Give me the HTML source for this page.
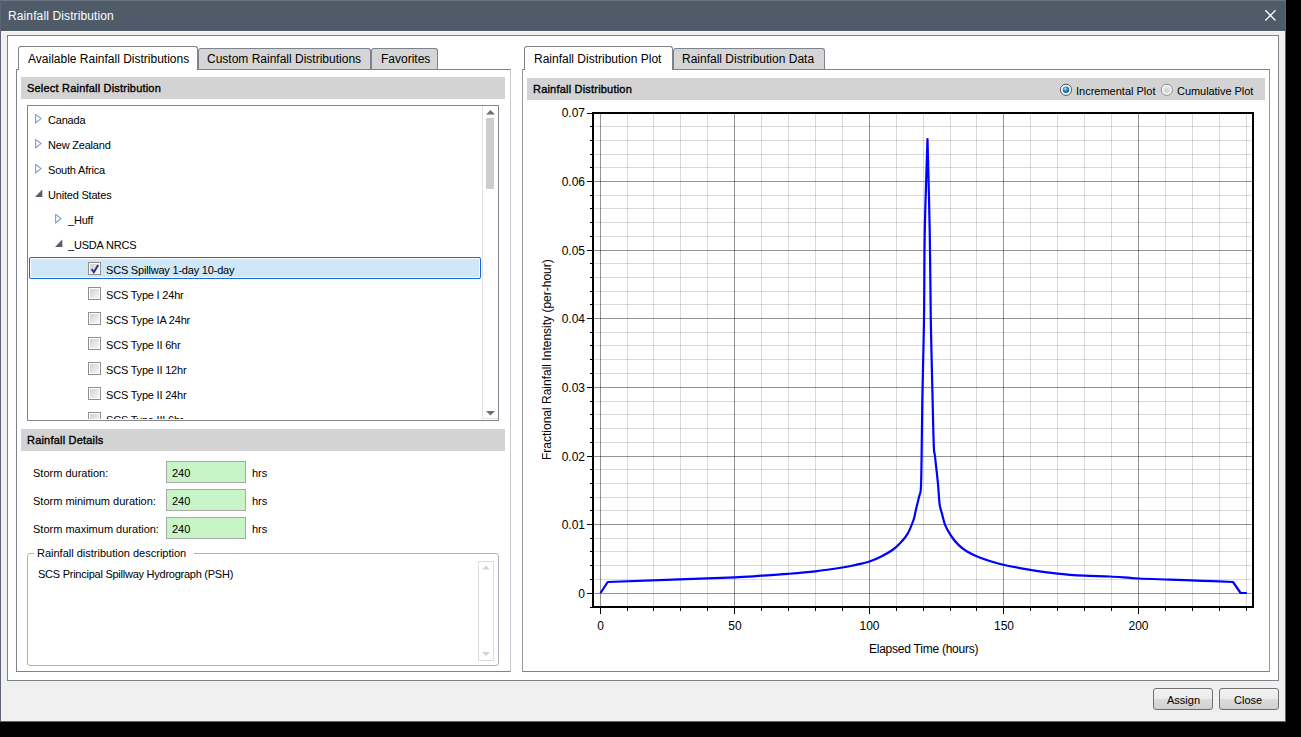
<!DOCTYPE html>
<html><head><meta charset="utf-8"><title>Rainfall Distribution</title>
<style>
html,body{margin:0;padding:0;}
body{width:1301px;height:737px;background:#000;position:relative;overflow:hidden;font-family:'Liberation Sans',sans-serif;}
div{position:absolute;box-sizing:border-box;}
.t{white-space:nowrap;}
</style></head><body>
<div style="left:0px;top:0px;width:1286px;height:722px;background:#f0f0f0;"></div>
<div style="left:0px;top:0px;width:1286px;height:31px;background:#505b69;"></div>
<div style="left:0px;top:0px;width:1286px;height:1px;background:#6b7582;"></div>
<div style="left:0px;top:31px;width:1286px;height:1px;background:#f8f8f8;"></div>
<div style="left:0px;top:0px;width:1px;height:722px;background:#5c6672;"></div>
<div style="left:1285px;top:0px;width:1px;height:722px;background:#5c6672;"></div>
<div style="left:0px;top:721px;width:1286px;height:1px;background:#5c6672;"></div>
<div class="t" style="left:8px;top:10px;font-size:12px;line-height:12px;color:#fff;letter-spacing:0.12px;">Rainfall Distribution</div>
<svg style="position:absolute;left:1262px;top:7px" width="16" height="16"><path d="M3.3 3.3 L13.5 13.5 M13.5 3.3 L3.3 13.5" stroke="#fff" stroke-width="1.25"/></svg>
<div style="left:7px;top:35px;width:1272px;height:646px;background:#fff;border:1px solid #7d838c;"></div>
<div style="left:16px;top:69px;width:495px;height:603px;background:#fff;border-top:1px solid #7d838c;border-left:1px solid #7d838c;border-bottom:1px solid #7d838c;border-right:1px solid #c7cacf;"></div>
<div style="left:18px;top:46px;width:180px;height:24px;background:#fff;border:1px solid #7d838c;border-bottom:none;border-radius:3px 3px 0 0;"></div>
<div class="t" style="left:28px;top:53px;font-size:12px;line-height:12px;color:#000;">Available Rainfall Distributions</div>
<div style="left:198px;top:48px;width:173px;height:21px;background:#d5d5d5;border:1px solid #7d838c;border-bottom:none;border-radius:3px 3px 0 0;"></div>
<div class="t" style="left:207px;top:53px;font-size:12px;line-height:12px;color:#000;">Custom Rainfall Distributions</div>
<div style="left:371px;top:48px;width:67px;height:21px;background:#d5d5d5;border:1px solid #7d838c;border-bottom:none;border-radius:3px 3px 0 0;"></div>
<div class="t" style="left:381px;top:53px;font-size:12px;line-height:12px;color:#000;">Favorites</div>
<div style="left:522px;top:69px;width:748px;height:603px;background:#fff;border-top:1px solid #7d838c;border-left:1px solid #959aa2;border-bottom:1px solid #7d838c;border-right:1px solid #959aa2;"></div>
<div style="left:524px;top:46px;width:149px;height:24px;background:#fff;border:1px solid #7d838c;border-bottom:none;border-radius:3px 3px 0 0;"></div>
<div class="t" style="left:534px;top:53px;font-size:12px;line-height:12px;color:#000;">Rainfall Distribution Plot</div>
<div style="left:673px;top:48px;width:152px;height:21px;background:#d5d5d5;border:1px solid #7d838c;border-bottom:none;border-radius:3px 3px 0 0;"></div>
<div class="t" style="left:682px;top:53px;font-size:12px;line-height:12px;color:#000;">Rainfall Distribution Data</div>
<div style="left:21px;top:77px;width:484px;height:22px;background:#d3d3d3;"></div>
<div class="t" style="left:27px;top:83px;font-size:11px;line-height:11px;letter-spacing:0.2px;color:#000;-webkit-text-stroke:0.35px #000;">Select Rainfall Distribution</div>
<div style="left:21px;top:429px;width:484px;height:22px;background:#d3d3d3;"></div>
<div class="t" style="left:27px;top:435px;font-size:11px;line-height:11px;letter-spacing:0.2px;color:#000;-webkit-text-stroke:0.35px #000;">Rainfall Details</div>
<div style="left:527px;top:78px;width:738px;height:22px;background:#d3d3d3;"></div>
<div class="t" style="left:533px;top:84px;font-size:11px;line-height:11px;letter-spacing:0.2px;color:#000;-webkit-text-stroke:0.35px #000;">Rainfall Distribution</div>
<div style="left:27px;top:105px;width:472px;height:316px;background:#fff;border:1px solid #828790;"></div>
<div style="left:482px;top:106px;width:16px;height:313px;background:#fff;border-left:1px solid #e3e3e3;border-bottom:1px solid #e3e3e3;"></div>
<svg style="position:absolute;left:482px;top:106px" width="16" height="313"><path d="M4 8.5 L8.5 4 L13 8.5 Z" fill="#6f6f6f"/><rect x="4" y="12" width="8" height="71" fill="#cdcdcd"/><path d="M4 305 L8.5 309.5 L13 305 Z" fill="#6f6f6f"/></svg>
<div style="left:28px;top:106px;width:454px;height:313px;overflow:hidden;">
<div style="left:1px;top:151px;width:452px;height:22px;border:1px solid #1a69d0;border-radius:2px;background:#cfe7f6;box-shadow:inset 0 0 0 1px #fff;"></div>
<svg style="position:absolute;left:7px;top:8px" width="10" height="11"><path d="M0.6 0.4 L6 4.6 L0.6 8.8 Z" fill="none" stroke="#7c9dd3" stroke-width="1.1"/></svg>
<div class="t" style="left:20px;top:9px;font-size:11px;line-height:11px;color:#000;letter-spacing:-0.2px;">Canada</div>
<svg style="position:absolute;left:7px;top:33px" width="10" height="11"><path d="M0.6 0.4 L6 4.6 L0.6 8.8 Z" fill="none" stroke="#7c9dd3" stroke-width="1.1"/></svg>
<div class="t" style="left:20px;top:34px;font-size:11px;line-height:11px;color:#000;letter-spacing:-0.2px;">New Zealand</div>
<svg style="position:absolute;left:7px;top:58px" width="10" height="11"><path d="M0.6 0.4 L6 4.6 L0.6 8.8 Z" fill="none" stroke="#7c9dd3" stroke-width="1.1"/></svg>
<div class="t" style="left:20px;top:59px;font-size:11px;line-height:11px;color:#000;letter-spacing:-0.2px;">South Africa</div>
<svg style="position:absolute;left:7px;top:83px" width="10" height="10"><path d="M7.3 0.6 L7.3 8 L-0.1 8 Z" fill="#5b5b6b"/></svg>
<div class="t" style="left:20px;top:84px;font-size:11px;line-height:11px;color:#000;letter-spacing:-0.2px;">United States</div>
<svg style="position:absolute;left:27px;top:108px" width="10" height="11"><path d="M0.6 0.4 L6 4.6 L0.6 8.8 Z" fill="none" stroke="#7c9dd3" stroke-width="1.1"/></svg>
<div class="t" style="left:40px;top:109px;font-size:11px;line-height:11px;color:#000;letter-spacing:-0.2px;">_Huff</div>
<svg style="position:absolute;left:27px;top:133px" width="10" height="10"><path d="M7.3 0.6 L7.3 8 L-0.1 8 Z" fill="#5b5b6b"/></svg>
<div class="t" style="left:40px;top:134px;font-size:11px;line-height:11px;color:#000;letter-spacing:-0.2px;">_USDA NRCS</div>
<svg style="position:absolute;left:60px;top:156px" width="13" height="13"><defs><linearGradient id="cbg" x1="0" y1="0" x2="1" y2="1"><stop offset="0" stop-color="#cfd1d4"/><stop offset="1" stop-color="#f7f7f7"/></linearGradient></defs><rect x="0.5" y="0.5" width="12" height="12" fill="#fff" stroke="#8e8f8f"/><rect x="2" y="2" width="9" height="9" fill="url(#cbg)"/><path d="M3.6 7 L5.8 10.2 L10.2 3" fill="none" stroke="#2e3192" stroke-width="2"/></svg>
<div class="t" style="left:78px;top:159px;font-size:11px;line-height:11px;color:#000;letter-spacing:-0.2px;">SCS Spillway 1-day 10-day</div>
<svg style="position:absolute;left:60px;top:181px" width="13" height="13"><defs><linearGradient id="cbg" x1="0" y1="0" x2="1" y2="1"><stop offset="0" stop-color="#cfd1d4"/><stop offset="1" stop-color="#f7f7f7"/></linearGradient></defs><rect x="0.5" y="0.5" width="12" height="12" fill="#fff" stroke="#8e8f8f"/><rect x="2" y="2" width="9" height="9" fill="url(#cbg)"/></svg>
<div class="t" style="left:78px;top:184px;font-size:11px;line-height:11px;color:#000;letter-spacing:-0.2px;">SCS Type I 24hr</div>
<svg style="position:absolute;left:60px;top:206px" width="13" height="13"><defs><linearGradient id="cbg" x1="0" y1="0" x2="1" y2="1"><stop offset="0" stop-color="#cfd1d4"/><stop offset="1" stop-color="#f7f7f7"/></linearGradient></defs><rect x="0.5" y="0.5" width="12" height="12" fill="#fff" stroke="#8e8f8f"/><rect x="2" y="2" width="9" height="9" fill="url(#cbg)"/></svg>
<div class="t" style="left:78px;top:209px;font-size:11px;line-height:11px;color:#000;letter-spacing:-0.2px;">SCS Type IA 24hr</div>
<svg style="position:absolute;left:60px;top:231px" width="13" height="13"><defs><linearGradient id="cbg" x1="0" y1="0" x2="1" y2="1"><stop offset="0" stop-color="#cfd1d4"/><stop offset="1" stop-color="#f7f7f7"/></linearGradient></defs><rect x="0.5" y="0.5" width="12" height="12" fill="#fff" stroke="#8e8f8f"/><rect x="2" y="2" width="9" height="9" fill="url(#cbg)"/></svg>
<div class="t" style="left:78px;top:234px;font-size:11px;line-height:11px;color:#000;letter-spacing:-0.2px;">SCS Type II 6hr</div>
<svg style="position:absolute;left:60px;top:256px" width="13" height="13"><defs><linearGradient id="cbg" x1="0" y1="0" x2="1" y2="1"><stop offset="0" stop-color="#cfd1d4"/><stop offset="1" stop-color="#f7f7f7"/></linearGradient></defs><rect x="0.5" y="0.5" width="12" height="12" fill="#fff" stroke="#8e8f8f"/><rect x="2" y="2" width="9" height="9" fill="url(#cbg)"/></svg>
<div class="t" style="left:78px;top:259px;font-size:11px;line-height:11px;color:#000;letter-spacing:-0.2px;">SCS Type II 12hr</div>
<svg style="position:absolute;left:60px;top:281px" width="13" height="13"><defs><linearGradient id="cbg" x1="0" y1="0" x2="1" y2="1"><stop offset="0" stop-color="#cfd1d4"/><stop offset="1" stop-color="#f7f7f7"/></linearGradient></defs><rect x="0.5" y="0.5" width="12" height="12" fill="#fff" stroke="#8e8f8f"/><rect x="2" y="2" width="9" height="9" fill="url(#cbg)"/></svg>
<div class="t" style="left:78px;top:284px;font-size:11px;line-height:11px;color:#000;letter-spacing:-0.2px;">SCS Type II 24hr</div>
<svg style="position:absolute;left:60px;top:306px" width="13" height="13"><defs><linearGradient id="cbg" x1="0" y1="0" x2="1" y2="1"><stop offset="0" stop-color="#cfd1d4"/><stop offset="1" stop-color="#f7f7f7"/></linearGradient></defs><rect x="0.5" y="0.5" width="12" height="12" fill="#fff" stroke="#8e8f8f"/><rect x="2" y="2" width="9" height="9" fill="url(#cbg)"/></svg>
<div class="t" style="left:78px;top:309px;font-size:11px;line-height:11px;color:#000;letter-spacing:-0.2px;">SCS Type III 6hr</div>
</div>
<div class="t" style="left:33px;top:468px;font-size:11px;line-height:11px;color:#000;">Storm duration:</div>
<div style="left:166px;top:461px;width:80px;height:22px;background:#c8f5c8;border:1px solid #a9abab;"></div>
<div class="t" style="left:172px;top:468px;font-size:11px;line-height:11px;color:#000;">240</div>
<div class="t" style="left:252px;top:468px;font-size:11px;line-height:11px;color:#000;">hrs</div>
<div class="t" style="left:33px;top:496px;font-size:11px;line-height:11px;color:#000;">Storm minimum duration:</div>
<div style="left:166px;top:489px;width:80px;height:22px;background:#c8f5c8;border:1px solid #a9abab;"></div>
<div class="t" style="left:172px;top:496px;font-size:11px;line-height:11px;color:#000;">240</div>
<div class="t" style="left:252px;top:496px;font-size:11px;line-height:11px;color:#000;">hrs</div>
<div class="t" style="left:33px;top:524px;font-size:11px;line-height:11px;color:#000;">Storm maximum duration:</div>
<div style="left:166px;top:517px;width:80px;height:22px;background:#c8f5c8;border:1px solid #a9abab;"></div>
<div class="t" style="left:172px;top:524px;font-size:11px;line-height:11px;color:#000;">240</div>
<div class="t" style="left:252px;top:524px;font-size:11px;line-height:11px;color:#000;">hrs</div>
<div style="left:27px;top:553px;width:472px;height:113px;border:1px solid #adb2b8;border-radius:3px;"></div>
<div style="left:34px;top:550px;width:160px;height:8px;background:#fff;"></div>
<div class="t" style="left:37px;top:548px;font-size:11px;line-height:11px;color:#000;">Rainfall distribution description</div>
<div class="t" style="left:38px;top:569px;font-size:11px;line-height:11px;color:#000;letter-spacing:-0.25px;">SCS Principal Spillway Hydrograph (PSH)</div>
<div style="left:478px;top:561px;width:16px;height:100px;border:1px solid #dcdcdc;"></div>
<svg style="position:absolute;left:478px;top:561px" width="16" height="100"><path d="M4 8.5 L8 4.5 L12 8.5 Z" fill="#d3d3d3"/><path d="M4 91 L8 95 L12 91 Z" fill="#d3d3d3"/></svg>
<svg style="position:absolute;left:1058px;top:82px" width="120" height="16"><defs><radialGradient id="rg" cx="0.4" cy="0.35" r="0.65"><stop offset="0" stop-color="#b8ecff"/><stop offset="0.45" stop-color="#2b93d3"/><stop offset="1" stop-color="#0f5a93"/></radialGradient><radialGradient id="rg2" cx="0.5" cy="0.6" r="0.6"><stop offset="0" stop-color="#c9ced6"/><stop offset="1" stop-color="#eef0f3"/></radialGradient></defs><circle cx="8" cy="7.8" r="5.6" fill="#fff" stroke="#555" stroke-width="1"/><circle cx="8" cy="7.8" r="3.3" fill="url(#rg)"/><circle cx="108.8" cy="7.8" r="5.6" fill="#fff" stroke="#8c8c8c" stroke-width="1"/><circle cx="108.8" cy="7.8" r="4.2" fill="url(#rg2)"/></svg>
<div class="t" style="left:1076px;top:86px;font-size:11px;line-height:11px;color:#000;">Incremental Plot</div>
<div class="t" style="left:1177px;top:86px;font-size:11px;line-height:11px;color:#000;letter-spacing:-0.05px;">Cumulative Plot</div>
<svg style="position:absolute;left:0;top:0" width="1301" height="737" shape-rendering="crispEdges"><rect x="594" y="126" width="658" height="1" fill="rgba(0,0,0,0.145)"/><rect x="594" y="140" width="658" height="1" fill="rgba(0,0,0,0.145)"/><rect x="594" y="154" width="658" height="1" fill="rgba(0,0,0,0.145)"/><rect x="594" y="167" width="658" height="1" fill="rgba(0,0,0,0.145)"/><rect x="594" y="181" width="658" height="1" fill="rgba(0,0,0,0.42)"/><rect x="594" y="195" width="658" height="1" fill="rgba(0,0,0,0.145)"/><rect x="594" y="208" width="658" height="1" fill="rgba(0,0,0,0.145)"/><rect x="594" y="222" width="658" height="1" fill="rgba(0,0,0,0.145)"/><rect x="594" y="236" width="658" height="1" fill="rgba(0,0,0,0.145)"/><rect x="594" y="250" width="658" height="1" fill="rgba(0,0,0,0.42)"/><rect x="594" y="263" width="658" height="1" fill="rgba(0,0,0,0.145)"/><rect x="594" y="277" width="658" height="1" fill="rgba(0,0,0,0.145)"/><rect x="594" y="291" width="658" height="1" fill="rgba(0,0,0,0.145)"/><rect x="594" y="304" width="658" height="1" fill="rgba(0,0,0,0.145)"/><rect x="594" y="318" width="658" height="1" fill="rgba(0,0,0,0.42)"/><rect x="594" y="332" width="658" height="1" fill="rgba(0,0,0,0.145)"/><rect x="594" y="345" width="658" height="1" fill="rgba(0,0,0,0.145)"/><rect x="594" y="359" width="658" height="1" fill="rgba(0,0,0,0.145)"/><rect x="594" y="373" width="658" height="1" fill="rgba(0,0,0,0.145)"/><rect x="594" y="387" width="658" height="1" fill="rgba(0,0,0,0.42)"/><rect x="594" y="401" width="658" height="1" fill="rgba(0,0,0,0.145)"/><rect x="594" y="414" width="658" height="1" fill="rgba(0,0,0,0.145)"/><rect x="594" y="428" width="658" height="1" fill="rgba(0,0,0,0.145)"/><rect x="594" y="442" width="658" height="1" fill="rgba(0,0,0,0.145)"/><rect x="594" y="456" width="658" height="1" fill="rgba(0,0,0,0.42)"/><rect x="594" y="469" width="658" height="1" fill="rgba(0,0,0,0.145)"/><rect x="594" y="483" width="658" height="1" fill="rgba(0,0,0,0.145)"/><rect x="594" y="497" width="658" height="1" fill="rgba(0,0,0,0.145)"/><rect x="594" y="510" width="658" height="1" fill="rgba(0,0,0,0.145)"/><rect x="594" y="524" width="658" height="1" fill="rgba(0,0,0,0.42)"/><rect x="594" y="538" width="658" height="1" fill="rgba(0,0,0,0.145)"/><rect x="594" y="551" width="658" height="1" fill="rgba(0,0,0,0.145)"/><rect x="594" y="565" width="658" height="1" fill="rgba(0,0,0,0.145)"/><rect x="594" y="579" width="658" height="1" fill="rgba(0,0,0,0.145)"/><rect x="594" y="593" width="658" height="1" fill="rgba(0,0,0,0.42)"/><rect x="600" y="114" width="1" height="492" fill="rgba(0,0,0,0.42)"/><rect x="627" y="114" width="1" height="492" fill="rgba(0,0,0,0.145)"/><rect x="653" y="114" width="1" height="492" fill="rgba(0,0,0,0.145)"/><rect x="680" y="114" width="1" height="492" fill="rgba(0,0,0,0.145)"/><rect x="707" y="114" width="1" height="492" fill="rgba(0,0,0,0.145)"/><rect x="734" y="114" width="1" height="492" fill="rgba(0,0,0,0.42)"/><rect x="761" y="114" width="1" height="492" fill="rgba(0,0,0,0.145)"/><rect x="788" y="114" width="1" height="492" fill="rgba(0,0,0,0.145)"/><rect x="815" y="114" width="1" height="492" fill="rgba(0,0,0,0.145)"/><rect x="842" y="114" width="1" height="492" fill="rgba(0,0,0,0.145)"/><rect x="869" y="114" width="1" height="492" fill="rgba(0,0,0,0.42)"/><rect x="896" y="114" width="1" height="492" fill="rgba(0,0,0,0.145)"/><rect x="923" y="114" width="1" height="492" fill="rgba(0,0,0,0.145)"/><rect x="950" y="114" width="1" height="492" fill="rgba(0,0,0,0.145)"/><rect x="976" y="114" width="1" height="492" fill="rgba(0,0,0,0.145)"/><rect x="1003" y="114" width="1" height="492" fill="rgba(0,0,0,0.42)"/><rect x="1030" y="114" width="1" height="492" fill="rgba(0,0,0,0.145)"/><rect x="1057" y="114" width="1" height="492" fill="rgba(0,0,0,0.145)"/><rect x="1084" y="114" width="1" height="492" fill="rgba(0,0,0,0.145)"/><rect x="1111" y="114" width="1" height="492" fill="rgba(0,0,0,0.145)"/><rect x="1138" y="114" width="1" height="492" fill="rgba(0,0,0,0.42)"/><rect x="1165" y="114" width="1" height="492" fill="rgba(0,0,0,0.145)"/><rect x="1192" y="114" width="1" height="492" fill="rgba(0,0,0,0.145)"/><rect x="1219" y="114" width="1" height="492" fill="rgba(0,0,0,0.145)"/><rect x="1246" y="114" width="1" height="492" fill="rgba(0,0,0,0.145)"/><rect x="592" y="112" width="662" height="2" fill="#000"/><rect x="592" y="606" width="662" height="2" fill="#000"/><rect x="592" y="112" width="2" height="496" fill="#000"/><rect x="1252" y="112" width="2" height="496" fill="#000"/><rect x="587" y="113" width="5" height="1" fill="#000"/><rect x="590" y="126" width="2" height="1" fill="#000"/><rect x="590" y="140" width="2" height="1" fill="#000"/><rect x="590" y="154" width="2" height="1" fill="#000"/><rect x="590" y="167" width="2" height="1" fill="#000"/><rect x="587" y="181" width="5" height="1" fill="#000"/><rect x="590" y="195" width="2" height="1" fill="#000"/><rect x="590" y="208" width="2" height="1" fill="#000"/><rect x="590" y="222" width="2" height="1" fill="#000"/><rect x="590" y="236" width="2" height="1" fill="#000"/><rect x="587" y="250" width="5" height="1" fill="#000"/><rect x="590" y="263" width="2" height="1" fill="#000"/><rect x="590" y="277" width="2" height="1" fill="#000"/><rect x="590" y="291" width="2" height="1" fill="#000"/><rect x="590" y="304" width="2" height="1" fill="#000"/><rect x="587" y="318" width="5" height="1" fill="#000"/><rect x="590" y="332" width="2" height="1" fill="#000"/><rect x="590" y="345" width="2" height="1" fill="#000"/><rect x="590" y="359" width="2" height="1" fill="#000"/><rect x="590" y="373" width="2" height="1" fill="#000"/><rect x="587" y="387" width="5" height="1" fill="#000"/><rect x="590" y="401" width="2" height="1" fill="#000"/><rect x="590" y="414" width="2" height="1" fill="#000"/><rect x="590" y="428" width="2" height="1" fill="#000"/><rect x="590" y="442" width="2" height="1" fill="#000"/><rect x="587" y="456" width="5" height="1" fill="#000"/><rect x="590" y="469" width="2" height="1" fill="#000"/><rect x="590" y="483" width="2" height="1" fill="#000"/><rect x="590" y="497" width="2" height="1" fill="#000"/><rect x="590" y="510" width="2" height="1" fill="#000"/><rect x="587" y="524" width="5" height="1" fill="#000"/><rect x="590" y="538" width="2" height="1" fill="#000"/><rect x="590" y="551" width="2" height="1" fill="#000"/><rect x="590" y="565" width="2" height="1" fill="#000"/><rect x="590" y="579" width="2" height="1" fill="#000"/><rect x="587" y="593" width="5" height="1" fill="#000"/><rect x="590" y="607" width="2" height="1" fill="#000"/><rect x="600" y="608" width="1" height="6" fill="#000"/><rect x="627" y="608" width="1" height="3" fill="#000"/><rect x="653" y="608" width="1" height="3" fill="#000"/><rect x="680" y="608" width="1" height="3" fill="#000"/><rect x="707" y="608" width="1" height="3" fill="#000"/><rect x="734" y="608" width="1" height="6" fill="#000"/><rect x="761" y="608" width="1" height="3" fill="#000"/><rect x="788" y="608" width="1" height="3" fill="#000"/><rect x="815" y="608" width="1" height="3" fill="#000"/><rect x="842" y="608" width="1" height="3" fill="#000"/><rect x="869" y="608" width="1" height="6" fill="#000"/><rect x="896" y="608" width="1" height="3" fill="#000"/><rect x="923" y="608" width="1" height="3" fill="#000"/><rect x="950" y="608" width="1" height="3" fill="#000"/><rect x="976" y="608" width="1" height="3" fill="#000"/><rect x="1003" y="608" width="1" height="6" fill="#000"/><rect x="1030" y="608" width="1" height="3" fill="#000"/><rect x="1057" y="608" width="1" height="3" fill="#000"/><rect x="1084" y="608" width="1" height="3" fill="#000"/><rect x="1111" y="608" width="1" height="3" fill="#000"/><rect x="1138" y="608" width="1" height="6" fill="#000"/><rect x="1165" y="608" width="1" height="3" fill="#000"/><rect x="1192" y="608" width="1" height="3" fill="#000"/><rect x="1219" y="608" width="1" height="3" fill="#000"/><rect x="1246" y="608" width="1" height="3" fill="#000"/></svg>
<svg style="position:absolute;left:0;top:0" width="1301" height="737"><path d="M600.50 593.00 C601.70 591.17 606.50 583.83 607.70 582.00 C628.92 581.22 709.43 578.35 735.00 577.30 C760.57 576.25 752.23 576.28 761.10 575.70 C769.97 575.12 779.17 574.53 788.20 573.80 C797.23 573.07 806.27 572.35 815.30 571.30 C824.33 570.25 836.15 568.47 842.40 567.50 C848.65 566.53 848.28 566.50 852.80 565.50 C857.32 564.50 864.67 563.05 869.50 561.50 C874.33 559.95 877.98 558.12 881.80 556.20 C885.62 554.28 889.32 552.22 892.40 550.00 C895.48 547.78 897.80 545.55 900.30 542.90 C902.80 540.25 905.20 537.92 907.40 534.10 C909.60 530.28 912.10 523.97 913.50 520.00 C914.90 516.03 914.85 514.27 915.80 510.30 C916.75 506.33 918.35 499.88 919.20 496.20 C920.05 492.52 920.50 494.82 920.90 488.20 C921.30 481.58 921.37 471.20 921.60 456.50 C921.83 441.80 921.90 422.75 922.30 400.00 C922.70 377.25 923.58 348.33 924.00 320.00 C924.42 291.67 924.22 260.17 924.80 230.00 C925.38 199.83 927.05 154.17 927.50 139.00 C927.87 154.17 929.15 199.83 929.70 230.00 C930.25 260.17 930.32 291.67 930.80 320.00 C931.28 348.33 932.10 379.02 932.60 400.00 C933.10 420.98 933.40 436.48 933.80 445.90 C934.20 455.32 934.32 450.32 935.00 456.50 C935.68 462.68 937.13 475.07 937.90 483.00 C938.67 490.93 938.95 499.10 939.60 504.10 C940.25 509.10 940.83 509.40 941.80 513.00 C942.77 516.60 943.78 521.78 945.40 525.70 C947.02 529.62 949.23 533.22 951.50 536.50 C953.77 539.78 956.40 542.90 959.00 545.40 C961.60 547.90 964.17 549.70 967.10 551.50 C970.03 553.30 973.20 554.73 976.60 556.20 C980.00 557.67 983.08 558.88 987.50 560.30 C991.92 561.72 995.97 563.12 1003.10 564.70 C1010.23 566.28 1021.25 568.32 1030.30 569.80 C1039.35 571.28 1048.37 572.62 1057.40 573.60 C1066.43 574.58 1075.73 575.22 1084.50 575.70 C1093.27 576.18 1101.02 576.03 1110.00 576.50 C1118.98 576.97 1128.47 577.98 1138.40 578.50 C1148.33 579.02 1158.93 579.22 1169.60 579.60 C1180.27 579.98 1191.83 580.40 1202.40 580.80 C1212.97 581.20 1227.90 581.80 1233.00 582.00 C1234.27 583.83 1239.33 591.17 1240.60 593.00 C1241.63 593.00 1245.77 593.00 1246.80 593.00" fill="none" stroke="#0000ff" stroke-width="2.2" stroke-linejoin="round"/></svg>
<div class="t" style="left:485px;width:100px;text-align:right;top:588px;font-size:12px;line-height:12px;color:#000;">0</div>
<div class="t" style="left:485px;width:100px;text-align:right;top:519px;font-size:12px;line-height:12px;color:#000;">0.01</div>
<div class="t" style="left:485px;width:100px;text-align:right;top:451px;font-size:12px;line-height:12px;color:#000;">0.02</div>
<div class="t" style="left:485px;width:100px;text-align:right;top:382px;font-size:12px;line-height:12px;color:#000;">0.03</div>
<div class="t" style="left:485px;width:100px;text-align:right;top:313px;font-size:12px;line-height:12px;color:#000;">0.04</div>
<div class="t" style="left:485px;width:100px;text-align:right;top:245px;font-size:12px;line-height:12px;color:#000;">0.05</div>
<div class="t" style="left:485px;width:100px;text-align:right;top:176px;font-size:12px;line-height:12px;color:#000;">0.06</div>
<div class="t" style="left:485px;width:100px;text-align:right;top:107px;font-size:12px;line-height:12px;color:#000;">0.07</div>
<div class="t" style="left:550.5px;width:100px;text-align:center;top:620px;font-size:12px;line-height:12px;color:#000;">0</div>
<div class="t" style="left:685.0px;width:100px;text-align:center;top:620px;font-size:12px;line-height:12px;color:#000;">50</div>
<div class="t" style="left:819.5px;width:100px;text-align:center;top:620px;font-size:12px;line-height:12px;color:#000;">100</div>
<div class="t" style="left:954.0px;width:100px;text-align:center;top:620px;font-size:12px;line-height:12px;color:#000;">150</div>
<div class="t" style="left:1088.5px;width:100px;text-align:center;top:620px;font-size:12px;line-height:12px;color:#000;">200</div>
<div class="t" style="left:869px;top:643px;font-size:12px;line-height:12px;color:#000;letter-spacing:-0.24px;">Elapsed Time (hours)</div>
<div class="t" style="left:447px;top:354px;width:200px;height:12px;text-align:center;font-size:12px;line-height:12px;color:#000;transform:rotate(-90deg);white-space:nowrap;">Fractional Rainfall Intensity (per-hour)</div>
<div style="left:1153px;top:688px;width:60px;height:22px;border:1px solid #707070;border-radius:3px;background:linear-gradient(#f2f2f2 0,#ebebeb 50%,#dddddd 50%,#cfcfcf 100%);"></div>
<div class="t" style="left:1167px;top:695px;font-size:11px;line-height:11px;color:#000;">Assign</div>
<div style="left:1219px;top:688px;width:60px;height:22px;border:1px solid #707070;border-radius:3px;background:linear-gradient(#f2f2f2 0,#ebebeb 50%,#dddddd 50%,#cfcfcf 100%);"></div>
<div class="t" style="left:1234px;top:695px;font-size:11px;line-height:11px;color:#000;">Close</div>
</body></html>
